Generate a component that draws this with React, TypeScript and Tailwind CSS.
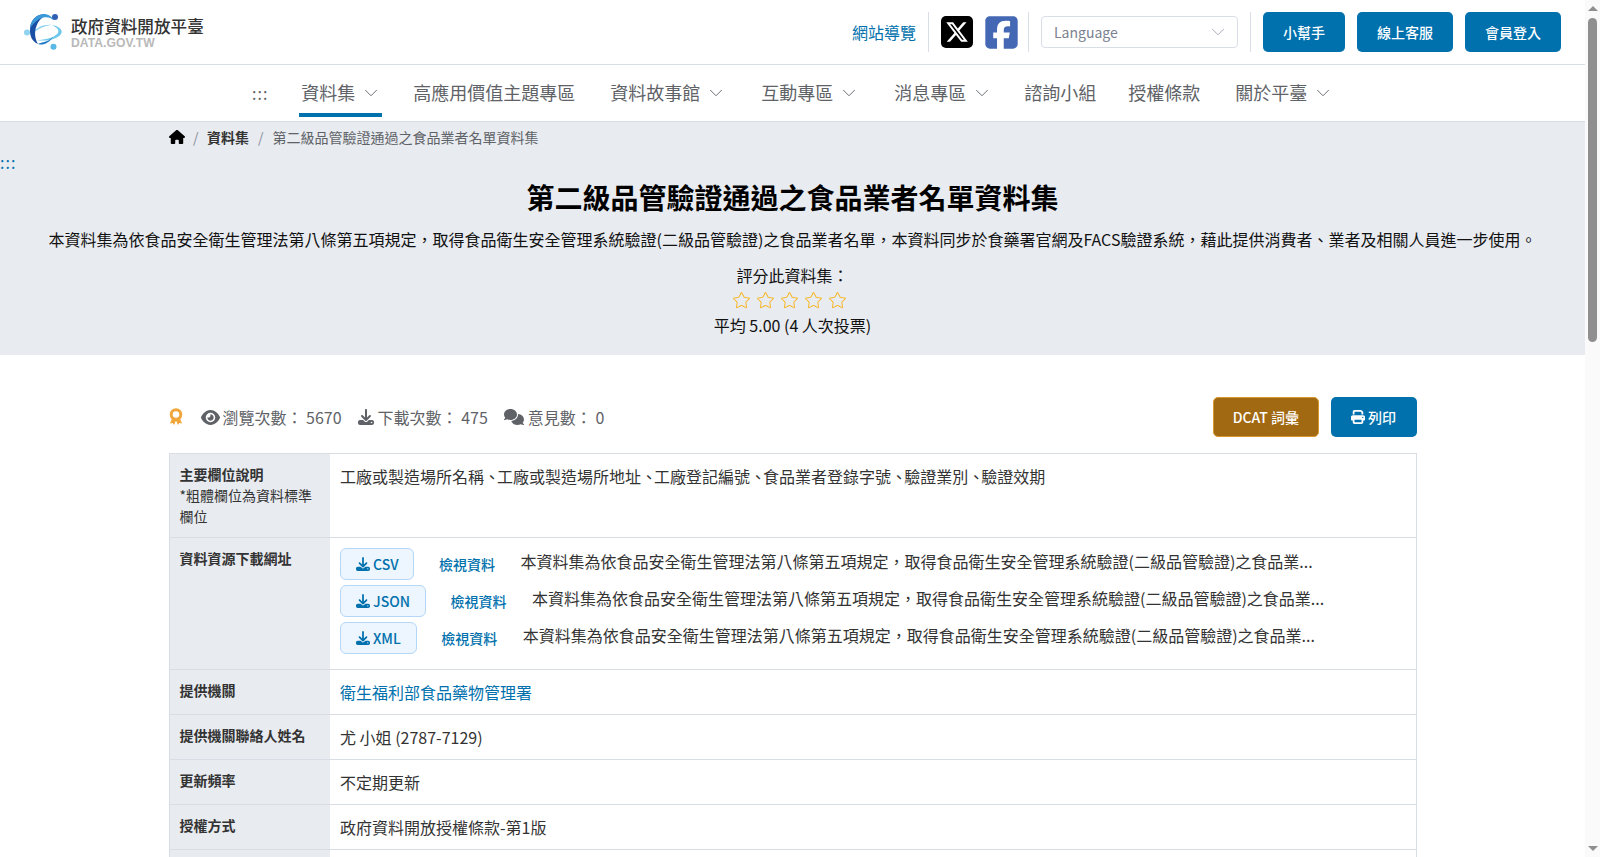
import React from "react";
import { ChevronDown, Star } from "lucide-react";
import { FaEye, FaDownload, FaComments, FaPrint, FaHouse, FaXTwitter, FaSquareFacebook } from "react-icons/fa6";

const font = { fontFamily: '"Noto Sans CJK TC","Noto Sans",sans-serif' };

function Logo() {
  return (
    <svg width="40" height="38" viewBox="0 0 40 38" className="shrink-0">
      <path d="M13 27C22 29 35 26 37.5 20C38.5 16 34 13 28 12C33 14.5 35.5 17 34 20C31 24.5 21 27 13 27Z" fill="#6cc7ea" />
      <path d="M7 22C11 14 21 11 28 12C21 12.5 13 16 7 22Z" fill="#8fd3ee" />
      <path d="M19 1.5C13 1 7 7 6.3 14C5.2 21 7 28 14 31C11 26 10 19 12.5 13C14 8.5 17 5 21 3C20.5 2 20 1.7 19 1.5Z" fill="#1a4fa3" />
      <path d="M6 15C6.5 9 11 2.5 18 1.2C23 .5 28 3 30 7.5C27 4.5 23 3.5 19 4.6C14 6 10 9.5 6 15Z" fill="#3a9ad9" />
      <path d="M14 31C18 29 24 29 29 24C25 30 19 33 14 31Z" fill="#1f7cc4" />
      <circle cx="3" cy="19.5" r="3" fill="#8fd3ee" />
      <circle cx="31" cy="4" r="3" fill="#2f5fb4" />
      <circle cx="29.5" cy="33.7" r="3" fill="#58b8e6" />
    </svg>
  );
}

function Award() {
  return (
    <svg width="14" height="18" viewBox="0 0 14 18" className="shrink-0">
      <path d="M3 10.5L1 15.5L3.6 15L5 17L7 12.5L9 17L10.4 15L13 15.5L11 10.5Z" fill="#f0a63a" />
      <circle cx="7" cy="6.5" r="4.8" fill="#fff" stroke="#f0a63a" strokeWidth="3" />
    </svg>
  );
}

function NavItem({ label, caret, active, className }: { label: string; caret?: boolean; active?: boolean; className?: string }) {
  return (
    <a className={`relative flex h-[52px] items-center pt-[3px] text-[18px] leading-[27px] text-[#5f6368] ${className ?? ""}`}>
      {label}
      {caret && <ChevronDown size={22} strokeWidth={1} className="ml-[5px] -mr-[4px] text-[#5f6368]" />}
      {active && <span className="absolute bottom-0 left-[-2px] right-[-4px] h-1 bg-[#0071ad]" />}
    </a>
  );
}

function HeaderBtn({ children }: { children: React.ReactNode }) {
  return <button className="h-10 rounded-[5px] bg-[#0071ad] px-5 text-sm font-medium text-white">{children}</button>;
}

const desc = "本資料集為依食品安全衛生管理法第八條第五項規定，取得食品衛生安全管理系統驗證(二級品管驗證)之食品業...";

function DownloadRow({ fmt }: { fmt: string }) {
  return (
    <div className="mb-[5px] flex items-center">
      <a className="flex h-8 items-center rounded-md border border-[#b5d7f7] bg-[#edf5fe] px-[15px] text-sm font-medium text-[#0071ad]">
        <FaDownload size={14} className="mr-[3px]" />
        {fmt}
      </a>
      <a className="ml-[24.5px] text-sm font-medium text-[#0071ad]">檢視資料</a>
      <span className="ml-[25.5px] -mt-[7px] text-[#333]">{desc}</span>
    </div>
  );
}

function Row({ head, children }: { head?: React.ReactNode; children?: React.ReactNode }) {
  return (
    <tr className="border border-[#d9dde6]">
      <th className="w-[161px] bg-[#e8ebf0] p-[10px] text-left align-top text-sm leading-[21px] font-bold text-[#333]">{head}</th>
      <td className="h-[44px] p-[10px] align-top leading-6 text-[#333]">{children}</td>
    </tr>
  );
}

function Scrollbar() {
  return (
    <div className="flex h-full w-[15px] shrink-0 flex-col items-center bg-[#fafafa]">
      <span className="mt-[6px] h-0 w-0 border-x-[5px] border-b-[5px] border-x-transparent border-b-[#8f8f8f]" />
      <span className="mt-[7px] h-[324px] w-[9px] rounded-[5px] bg-[#8f8f8f]" />
      <span className="mb-[6px] mt-auto h-0 w-0 border-x-[5px] border-t-[5px] border-x-transparent border-t-[#8f8f8f]" />
    </div>
  );
}

function Comma() {
  return <span className="tracking-[-3px]">、</span>;
}

export default function App() {
  return (
    <div className="flex h-[857px] overflow-hidden bg-white text-[#212529]" style={font}>
      <div className="min-w-0 flex-1 overflow-hidden">
        <header className="flex h-[65px] items-center border-b border-[#d9dde6] pl-6 pr-6">
          <Logo />
          <div className="ml-[7px] flex flex-col">
            <span className="text-[16.6px] leading-[21px] font-medium whitespace-nowrap text-[#333]">政府資料開放平臺</span>
            <span className="text-[12.2px] leading-[12px] font-bold whitespace-nowrap text-[#b9b9b9]" style={{ fontFamily: '"Liberation Sans",sans-serif' }}>DATA.GOV.TW</span>
          </div>
          <div className="ml-auto flex items-center">
            <a className="text-[#0071ad]">網站導覽</a>
            <span className="mx-3 h-10 w-px bg-[#d9dde6]" />
            <span className="flex h-8 w-8 items-center justify-center rounded-[5px] bg-black text-white"><FaXTwitter size={24} /></span>
            <FaSquareFacebook size={37} className="ml-[10px] text-[#4468b4]" />
            <span className="ml-2 mr-3 h-10 w-px bg-[#d9dde6]" />
            <div className="flex h-8 w-[197px] items-center justify-between rounded border border-[#d9dde6] bg-white pl-3 pr-2 text-sm text-[#7b8190]">
              Language
              <ChevronDown size={22} strokeWidth={1} className="text-[#a0a5b0]" />
            </div>
            <span className="mx-3 h-10 w-px bg-[#d9dde6]" />
            <div className="flex gap-3">
              <HeaderBtn>小幫手</HeaderBtn>
              <HeaderBtn>線上客服</HeaderBtn>
              <HeaderBtn>會員登入</HeaderBtn>
            </div>
          </div>
        </header>

        <nav className="flex h-[57px] items-start border-b border-[#d9dde6] pl-[252px]">
          <span className="mr-[33px] flex h-[52px] items-center pt-[3px] text-base tracking-[1px] text-[#5f6368]">:::</span>
          <NavItem label="資料集" caret active className="mr-[35px]" />
          <NavItem label="高應用價值主題專區" className="mr-[35px]" />
          <NavItem label="資料故事館" caret className="mr-[38px]" />
          <NavItem label="互動專區" caret className="mr-[38px]" />
          <NavItem label="消息專區" caret className="mr-[35px]" />
          <NavItem label="諮詢小組" className="mr-[32px]" />
          <NavItem label="授權條款" className="mr-[35px]" />
          <NavItem label="關於平臺" caret />
        </nav>

        <section className="bg-[#e8ebf0] pb-[18px] pt-[4px]">
          <div className="mx-auto flex h-[21px] w-[1280px] items-center px-4 text-sm">
            <FaHouse size={16} className="text-black" />
            <span className="mx-[8.5px] text-[#8a8f99]">/</span>
            <span className="font-bold text-[#333]">資料集</span>
            <span className="mx-[9px] text-[#8a8f99]">/</span>
            <span className="text-[#5f6368]">第二級品管驗證通過之食品業者名單資料集</span>
          </div>
          <div className="mt-[3px] h-6 text-base leading-6 tracking-[1px] text-[#0071ad]">:::</div>
          <h1 className="mt-[2px] text-center text-[28px] leading-[42px] font-bold text-black">第二級品管驗證通過之食品業者名單資料集</h1>
          <p className="mt-[9px] text-center leading-6 text-[#111]">本資料集為依食品安全衛生管理法第八條第五項規定，取得食品衛生安全管理系統驗證(二級品管驗證)之食品業者名單，本資料同步於食藥署官網及FACS驗證系統，藉此提供消費者、業者及相關人員進一步使用。</p>
          <p className="mt-3 text-center leading-6 text-[#111]">評分此資料集：</p>
          <div className="mt-1 flex justify-center gap-[5px] pr-[6px]">
            {[0, 1, 2, 3, 4].map((i) => (
              <Star key={i} size={19} strokeWidth={1.3} className="text-[#f5b82e]" />
            ))}
          </div>
          <p className="mt-[3px] text-center leading-6 text-[#111]">平均 5.00 (4 人次投票)</p>
        </section>

        <main className="mx-auto w-[1280px] px-4">
          <div className="mb-4 mt-[42px] flex h-10 items-center text-[#5f6368]">
            <Award />
            <FaEye size={19} className="ml-[18px] mr-[3px]" />
            <span>瀏覽次數： 5670</span>
            <FaDownload size={16} className="ml-[16px] mr-1" />
            <span>下載次數： 475</span>
            <FaComments size={20} className="ml-[16px] mr-1" />
            <span>意見數： 0</span>
            <button className="ml-auto h-10 rounded-[5px] border border-[#d9962e] bg-[#a16912] px-[18.5px] text-sm font-medium text-white">DCAT 詞彙</button>
            <button className="ml-3 flex h-10 items-center rounded-[5px] bg-[#0071ad] px-[20.5px] text-sm font-medium text-white">
              <FaPrint size={14} className="mr-[3px]" />
              列印
            </button>
          </div>

          <table className="w-full table-fixed border-collapse border border-[#d9dde6]">
            <tbody>
              <Row head={<>主要欄位說明<br /><span className="font-normal">*粗體欄位為資料標準欄位</span></>}>
                工廠或製造場所名稱<Comma />工廠或製造場所地址<Comma />工廠登記編號<Comma />食品業者登錄字號<Comma />驗證業別<Comma />驗證效期
              </Row>
              <Row head="資料資源下載網址">
                <DownloadRow fmt="CSV" />
                <DownloadRow fmt="JSON" />
                <DownloadRow fmt="XML" />
              </Row>
              <Row head="提供機關"><a className="text-[#0071ad]">衛生福利部食品藥物管理署</a></Row>
              <Row head="提供機關聯絡人姓名">尤 小姐 (2787-7129)</Row>
              <Row head="更新頻率">不定期更新</Row>
              <Row head="授權方式">政府資料開放授權條款-第1版</Row>
              <Row />
            </tbody>
          </table>
        </main>
      </div>
      <Scrollbar />
    </div>
  );
}
